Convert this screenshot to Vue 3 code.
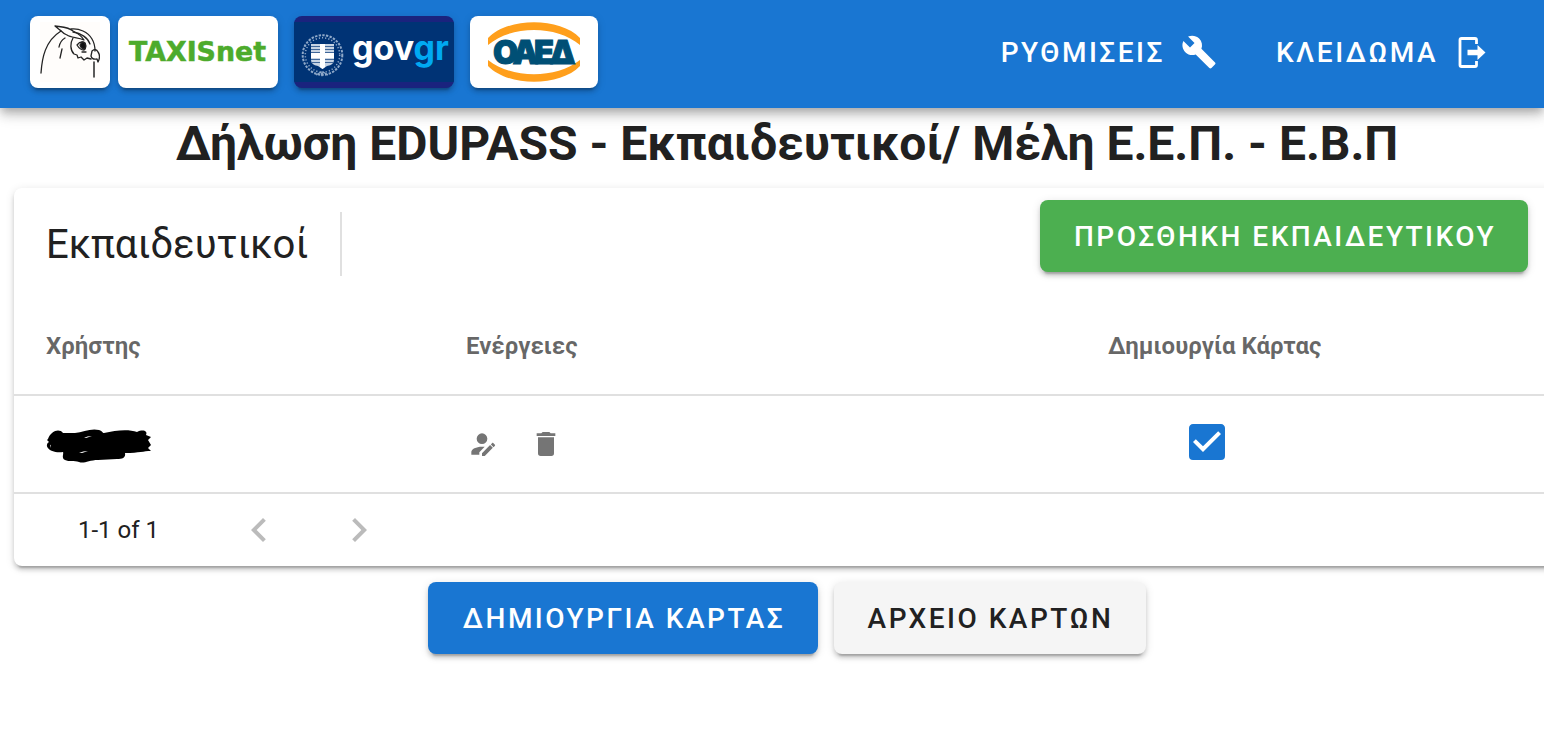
<template>
  <div class="app">
    <header class="app-bar">
      <nav class="links">
        <button class="link-btn owl" aria-label="Κουκουβάγια">
          <svg width="60" height="60" viewBox="0 0 60 60" fill="none" stroke="#242424" stroke-width="1.3" stroke-linecap="round" stroke-linejoin="round">
            <rect width="60" height="60" fill="#fffdfb" stroke="none" />
            <path d="M1 51C2 36 5 19 21 9" />
            <path d="M21 9L15 4C22 5 29 5 33 9C37 11 41 13 44 18C38 15 31 16 27 13C24 12 22 10 20 8" />
            <path d="M31 7C39 6 48 10 52 17C55 22 55 26 55 29" />
            <path d="M33 10C41 11 48 16 50 22" />
            <path d="M33 16C30 21 30 28 34 32L37 33L38 36L41 35L44 38L47 36L51 37" />
            <path d="M25 16Q20 19 19 25M22 27L20 36" />
            <path d="M37 23Q41 18 45 21Q47 25 44 28Q40 28 37 23M42 30H46" />
            <path d="M42 20Q47 20 45 27Q41 27 40 23Z" fill="#111" />
            <path d="M52 29Q56 26 58 30Q61 34 58 40L57 37Q52 38 51 34Z" />
            <path d="M54 40V55" stroke-width="1.5" />
          </svg>
        </button>
        <button class="link-btn taxis">
          <svg width="140" height="40" viewBox="0 0 140 40">
            <text x="1" y="28.500" textLength="137" lengthAdjust="spacingAndGlyphs" class="taxis-text">TAXISnet</text>
          </svg>
        </button>
        <button class="link-btn gov">
          <svg width="160" height="60" viewBox="0 0 160 60">
            <rect width="160" height="60" fill="#003375" />
            <g fill="none" stroke="#8fa9c9">
              <circle cx="28.500" cy="33" r="19.800" stroke-width="2" stroke-dasharray="2.4 1.3" />
              <circle cx="28.500" cy="33" r="17.200" stroke-width="1.500" stroke-dasharray="1.2 2" />
              <path d="M22 53L27 50L28 54L29 50L34 53" stroke-width="1.200" />
            </g>
            <path d="M17 22H40V38Q40 43 33 44L28.500 47L24 44Q17 43 17 38Z" fill="#c6d3e3" />
            <path d="M17 24.500H40M17 27.500H40M17 30.500H40M17 37.500H40M17 40.500H39" stroke="#40679a" />
            <path d="M26 22H31V31H40V36H31V45L28.500 47L26 45V36H17V31H26Z" fill="#fff" />
            <text x="58" y="38" textLength="97" lengthAdjust="spacingAndGlyphs" class="gov-text" fill="#fff">gov<tspan fill="#00a9f2">gr</tspan></text>
          </svg>
        </button>
        <button class="link-btn oaed">
          <svg width="92" height="60" viewBox="0 0 92 60">
            <path d="M0 16C20-5 72-5 92 16V23C68 3 24 3 0 23Z" fill="#ff9f1c" />
            <path d="M0 38C24 57 68 57 92 38V44C72 65 20 65 0 44Z" fill="#ff9f1c" />
            <text x="5" y="41.500" class="oaed-text">ΟΑΕΔ</text>
          </svg>
        </button>
      </nav>
      <div class="actions">
        <button class="bar-btn">
          <span>ΡΥΘΜΙΣΕΙΣ</span>
          <svg class="wrench" width="36" height="36" viewBox="0 0 24 24"><path :d="icons.wrench" /></svg>
        </button>
        <button class="bar-btn">
          <span>ΚΛΕΙΔΩΜΑ</span>
          <svg class="exit" width="36" height="36" viewBox="0 0 36 36">
            <path d="M24.500 10V6A1.500 1.500 0 0 0 23 4.500H9.500A1.500 1.500 0 0 0 8 6V31A1.500 1.500 0 0 0 9.500 32.500H23A1.500 1.500 0 0 0 24.500 31V27" fill="none" stroke="#fff" stroke-width="2.800" />
            <path d="M15.500 15.800H25.500V11L33.500 18.500L25.500 26V21.200H15.500Z" />
          </svg>
        </button>
      </div>
    </header>

    <main class="content">
      <h1 class="title">Δήλωση EDUPASS - Εκπαιδευτικοί/ Μέλη Ε.Ε.Π. - Ε.Β.Π</h1>

      <section class="card">
        <div class="toolbar">
          <span class="toolbar-title">Εκπαιδευτικοί</span>
          <span class="divider"></span>
          <button class="btn success">ΠΡΟΣΘΗΚΗ ΕΚΠΑΙΔΕΥΤΙΚΟΥ</button>
        </div>

        <div class="row head">
          <span v-for="h in headers" :key="h">{{ h }}</span>
        </div>

        <div class="row">
          <svg class="user" width="106" height="36" viewBox="0 0 106 36">
            <path d="M2 11C5 3 13 0 17 5L29 5C37 4 45 0 53 2C57 3 56 5 58 5C70 2 83 1 91 4C97 1 102 3 100 7L105 9L102 12L105 17L102 20L105 23C97 23 94 25 79 25C80 30 76 31 71 31L52 32C43 32 38 36 33 34C28 32 23 34 19 32C15 30 18 26 17 24C10 25 4 23 2 20C0 18 1 15 3 14L1 12Z" />
            <path d="M38 10Q41 8 46 8L40 10ZM33 25Q37 23 42 23L36 25ZM4 17Q5 16 5 20Z" fill="#fff" />
          </svg>
          <div class="row-actions">
            <svg width="32" height="32" viewBox="0 0 24 24"><path :d="icons.accountEdit" /></svg>
            <svg width="32" height="32" viewBox="0 0 24 24"><path :d="icons.trash" /></svg>
          </div>
          <button class="check" role="checkbox" :aria-checked="checked" @click="checked = !checked">
            <svg width="48" height="48" viewBox="0 0 24 24"><path :d="checked ? icons.checkOn : icons.checkOff" /></svg>
          </button>
        </div>

        <div class="footer">
          <span class="range">1-1 of 1</span>
          <svg width="48" height="48" viewBox="0 0 24 24"><path :d="icons.prev" /></svg>
          <svg width="48" height="48" viewBox="0 0 24 24"><path :d="icons.next" /></svg>
        </div>
      </section>

      <div class="bottom">
        <button class="btn primary">ΔΗΜΙΟΥΡΓΙΑ ΚΑΡΤΑΣ</button>
        <button class="btn plain">ΑΡΧΕΙΟ ΚΑΡΤΩΝ</button>
      </div>
    </main>
  </div>
</template>

<script setup>
import { ref } from 'vue'

const checked = ref(true)
const headers = ['Χρήστης', 'Ενέργειες', 'Δημιουργία Κάρτας']

const icons = {
  wrench: 'M22.7,19L13.6,9.9C14.5,7.6 14,4.9 12.1,3C10.1,1 7.1,0.6 4.7,1.7L9,6L6,9L1.6,4.7C0.4,7.1 0.9,10.1 2.9,12.1C4.8,14 7.5,14.5 9.8,13.6L18.9,22.7C19.3,23.1 19.9,23.1 20.3,22.7L22.6,20.4C23.1,20 23.1,19.3 22.7,19Z',
  accountEdit: 'M21.7,13.35L20.7,14.35L18.65,12.3L19.65,11.3C19.86,11.09 20.21,11.09 20.42,11.3L21.7,12.58C21.91,12.79 21.91,13.14 21.7,13.35M12,18.94V21H14.06L20.12,14.88L18.07,12.83L12,18.94M12,14C7.58,14 4,15.79 4,18V20H10V18.11L14,14.11C13.34,14.03 12.67,14 12,14M12,4A4,4 0 0,0 8,8A4,4 0 0,0 12,12A4,4 0 0,0 16,8A4,4 0 0,0 12,4Z',
  trash: 'M19,4H15.5L14.5,3H9.5L8.5,4H5V6H19M6,19A2,2 0 0,0 8,21H16A2,2 0 0,0 18,19V7H6V19Z',
  checkOn: 'M10,17L5,12L6.41,10.58L10,14.17L17.59,6.58L19,8M19,3H5C3.89,3 3,3.89 3,5V19A2,2 0 0,0 5,21H19A2,2 0 0,0 21,19V5C21,3.89 20.1,3 19,3Z',
  checkOff: 'M19,3H5C3.89,3 3,3.89 3,5V19A2,2 0 0,0 5,21H19A2,2 0 0,0 21,19V5C21,3.89 20.1,3 19,3M19,5V19H5V5H19Z',
  prev: 'M15.41,16.58L10.83,12L15.41,7.41L14,6L8,12L14,18L15.41,16.58Z',
  next: 'M8.59,16.58L13.17,12L8.59,7.41L10,6L16,12L10,18L8.59,16.58Z'
}
</script>

<style>
body {
  background: #fff;
  overflow: hidden;
}
</style>

<style scoped>
.app {
  height: 738px;
  overflow: hidden;
  font-family: Roboto, 'Noto Sans', sans-serif;
  color: #212121;
}

button {
  border: 0;
  padding: 0;
  background: none;
  font: inherit;
  color: inherit;
  cursor: pointer;
}

svg {
  display: block;
  flex: none;
}

.app-bar {
  position: relative;
  z-index: 1;
  display: flex;
  justify-content: space-between;
  align-items: flex-start;
  box-sizing: border-box;
  height: 108px;
  padding: 16px 56px 0 30px;
  background: #1976d2;
  box-shadow: 0 4px 8px -2px rgba(0, 0, 0, 0.2), 0 8px 10px 0 rgba(0, 0, 0, 0.14), 0 2px 20px 0 rgba(0, 0, 0, 0.12);
}

.links {
  display: flex;
}

.link-btn {
  display: flex;
  align-items: center;
  justify-content: center;
  height: 72px;
  border-radius: 8px;
  overflow: hidden;
  background: #fff;
  box-shadow: 0 6px 2px -4px rgba(0, 0, 0, 0.2), 0 4px 4px 0 rgba(0, 0, 0, 0.14), 0 2px 10px 0 rgba(0, 0, 0, 0.12);
}

.owl {
  width: 80px;
  margin-right: 8px;
}

.taxis {
  width: 160px;
  margin-right: 16px;
}

.gov {
  width: 160px;
  margin-right: 16px;
  background: #1a237e;
}

.oaed {
  width: 128px;
}

.taxis-text {
  font: bold 26px 'DejaVu Sans', sans-serif;
  fill: #4dab2c;
  stroke: #4dab2c;
  stroke-width: 0.5px;
}

.gov-text {
  font: 700 35px Inter, sans-serif;
}

.oaed-text {
  font: 900 32.5px Inter, sans-serif;
  letter-spacing: -4.2px;
  fill: #004f75;
  stroke: #004f75;
  stroke-width: 1px;
}

.actions {
  display: flex;
  gap: 59px;
  height: 72px;
}

.bar-btn {
  display: flex;
  align-items: center;
  font-size: 28px;
  font-weight: 500;
  letter-spacing: 2.5px;
  color: #fff;
}

.bar-btn svg {
  fill: #fff;
}

.wrench {
  margin-left: 16px;
}

.exit {
  margin-left: 14px;
}

.content {
  width: 1546px;
  margin-left: 14px;
}

.title {
  margin: 0;
  height: 80px;
  line-height: 72px;
  font-size: 48px;
  font-weight: 700;
  text-align: center;
  white-space: nowrap;
}

.card {
  height: 378px;
  border-radius: 8px;
  background: #fff;
  box-shadow: 0 6px 2px -4px rgba(0, 0, 0, 0.2), 0 4px 4px 0 rgba(0, 0, 0, 0.14), 0 2px 10px 0 rgba(0, 0, 0, 0.12);
}

.toolbar {
  display: flex;
  align-items: center;
  box-sizing: border-box;
  height: 112px;
  padding: 0 32px;
}

.toolbar-title {
  font-size: 40px;
}

.divider {
  width: 2px;
  height: 64px;
  margin-left: 32px;
  background: #e0e0e0;
}

.btn {
  box-sizing: border-box;
  height: 72px;
  padding-left: 2px;
  border-radius: 8px;
  font-size: 28px;
  font-weight: 500;
  letter-spacing: 2.5px;
  white-space: nowrap;
  box-shadow: 0 6px 2px -4px rgba(0, 0, 0, 0.2), 0 4px 4px 0 rgba(0, 0, 0, 0.14), 0 2px 10px 0 rgba(0, 0, 0, 0.12);
}

.success {
  width: 488px;
  margin: 0 0 16px auto;
  background: #4caf50;
  color: #fff;
}

.row {
  display: grid;
  grid-template-columns: 420px 530px 1fr;
  align-items: center;
  box-sizing: border-box;
  height: 98px;
  padding-left: 32px;
  border-bottom: 2px solid #e0e0e0;
}

.head {
  height: 96px;
  padding-bottom: 2px;
  font-size: 24px;
  font-weight: 700;
  color: rgba(0, 0, 0, 0.6);
}

.head span:last-child {
  padding-left: 112px;
}

.user {
  margin: 3px 0 0;
}

.row-actions {
  display: flex;
  gap: 32px;
  fill: #757575;
}

.check {
  width: 48px;
  margin: 0 0 4px 187px;
  fill: #1976d2;
}

.footer {
  display: flex;
  align-items: center;
  height: 72px;
  padding-left: 64px;
  fill: #bbb;
}

.footer svg + svg {
  margin-left: 52px;
}

.range {
  width: 157px;
  font-size: 24px;
}

.bottom {
  display: flex;
  justify-content: center;
  gap: 16px;
  padding-top: 16px;
}

.primary {
  width: 390px;
  background: #1976d2;
  color: #fff;
}

.plain {
  width: 312px;
  padding-left: 1px;
  background: #f5f5f5;
}
</style>
